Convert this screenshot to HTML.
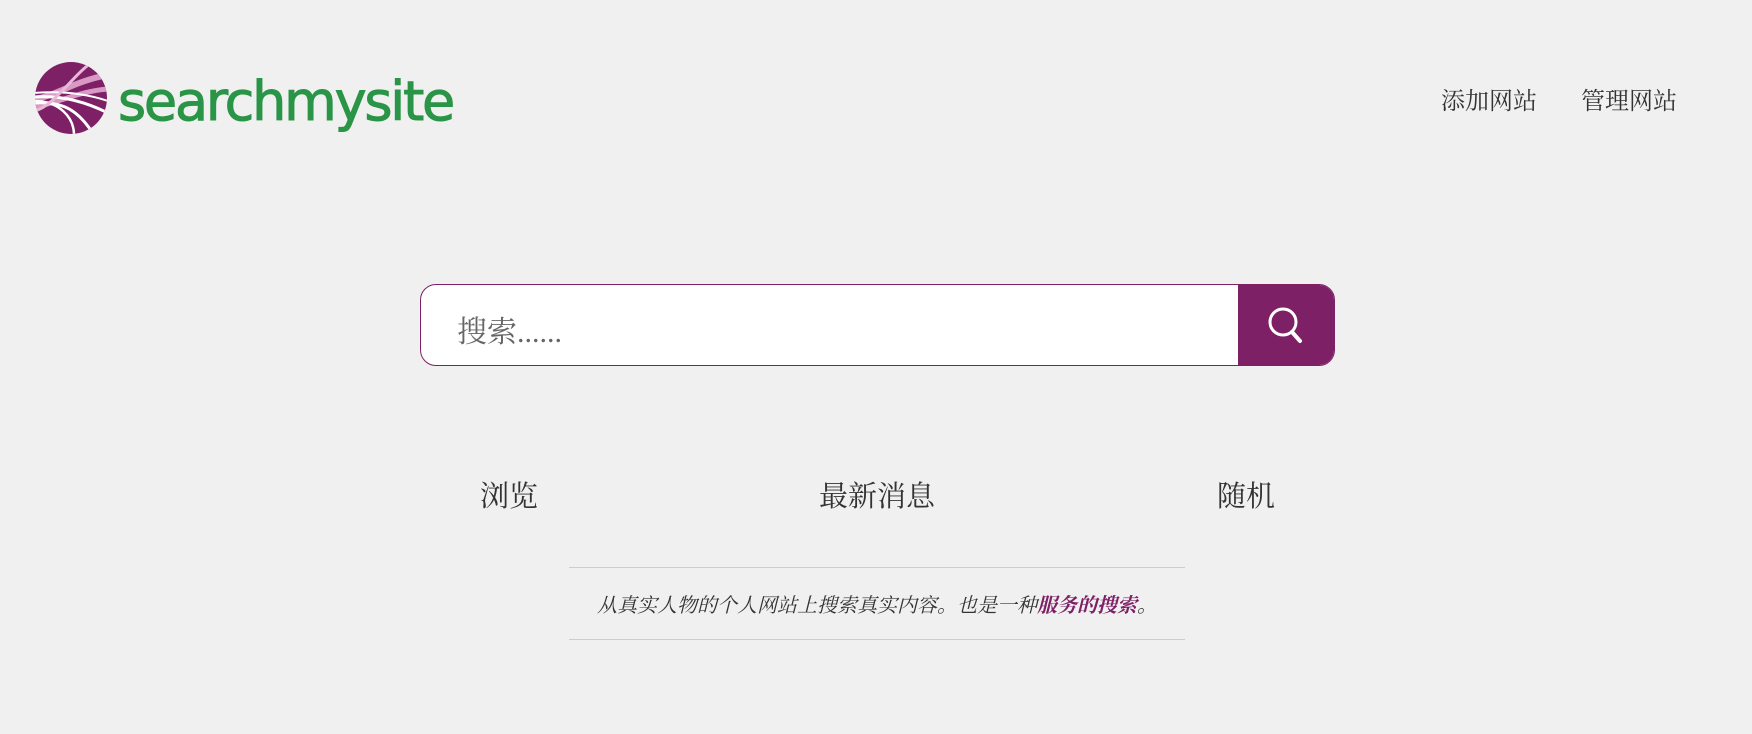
<!DOCTYPE html>
<html><head><meta charset="utf-8"><style>
body{margin:0;width:1752px;height:734px;background:#f0f0f0;font-family:"Liberation Serif","Noto Serif CJK SC",serif;color:#333;position:relative;overflow:hidden}
.a{position:absolute}
.nav{top:81px;font-size:24px;color:#333}
.sb{left:420px;top:284px;width:915px;height:82px;box-sizing:border-box;border:1px solid #7d2066;border-radius:16px;background:#fff;overflow:hidden}
.btn{position:absolute;right:0;top:0;width:96px;height:100%;background:#7d2066}
.ph{position:absolute;left:36px;top:22px;font-size:30px;color:#666}
.lk{top:474px;font-size:29px;transform:translateX(-50%);white-space:nowrap}
.hr{left:569px;width:616px;height:1px;background:#ccc}
</style></head><body>
<svg class="a" style="left:34px;top:61px" width="74" height="74" viewBox="0 0 74 74">
<defs><clipPath id="c"><circle cx="37" cy="37" r="36"/></clipPath></defs>
<circle cx="37" cy="37" r="36" fill="#7d2066"/>
<g clip-path="url(#c)" fill="none" stroke-linecap="butt">
<path d="M0 38 C20 36 40 20 74 14" stroke="#d89ac4" stroke-width="6"/>
<path d="M0 46 C25 42 45 30 74 28" stroke="#d89ac4" stroke-width="5"/>
<path d="M0 36 C25 34 50 40 74 52" stroke="#fff" stroke-width="3"/>
<path d="M0 42 C30 40 45 50 60 74" stroke="#fff" stroke-width="3"/>
<path d="M0 40 C25 40 40 56 40 74" stroke="#fff" stroke-width="2.5"/>
<path d="M0 32 C25 30 50 32 74 40" stroke="#fff" stroke-width="2"/>
<path d="M0 50 C20 46 40 12 60 0" stroke="#e9b8d9" stroke-width="3"/>
</g></svg>
<div class="a" style="left:118px;top:62px;font-family:'DejaVu Sans','Liberation Sans',sans-serif;font-size:54px;color:#2a9447;letter-spacing:-2.2px;line-height:80px;-webkit-text-stroke:1px #2a9447">searchmysite</div>
<div class="a nav" style="left:1441px">添加网站</div>
<div class="a nav" style="left:1581px">管理网站</div>
<div class="a sb"><div class="ph">搜索......</div><div class="btn">
<svg width="96" height="80" viewBox="0 0 96 80"><circle cx="45" cy="37" r="13" fill="none" stroke="#fff" stroke-width="3"/><path d="M54 47 L62 56" stroke="#fff" stroke-width="4" stroke-linecap="round"/></svg></div></div>
<div class="a lk" style="left:509px">浏览</div>
<div class="a lk" style="left:877px">最新消息</div>
<div class="a lk" style="left:1246px">随机</div>
<div class="a hr" style="top:567px"></div>
<div class="a" style="left:569px;width:616px;top:589px;text-align:center;font-size:20px;font-style:italic">从真实人物的个人网站上搜索真实内容。也是一种<b style="color:#7d2066">服务的搜索</b>。</div>
<div class="a hr" style="top:639px"></div>
</body></html>
